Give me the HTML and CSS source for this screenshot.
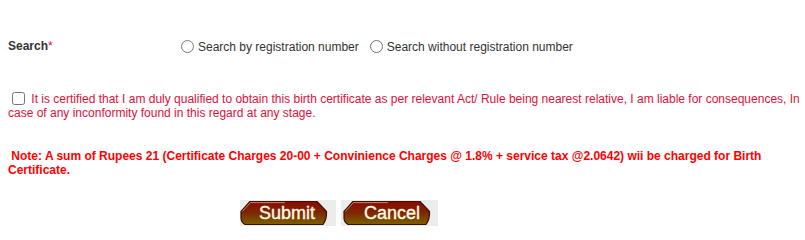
FILE: index.html
```html
<!DOCTYPE html>
<html>
<head>
<meta charset="utf-8">
<link rel="stylesheet" href="styles.css">
</head>
<body>
<div class="page">
  <div class="search-row">
    <div class="label">Search<span class="req">*</span></div>
    <div class="options">
      <label class="opt"><input type="radio" name="s" class="radio">Search by registration number</label>
      <label class="opt"><input type="radio" name="s" class="radio">Search without registration number</label>
    </div>
  </div>
  <div class="cert">
    <input type="checkbox" class="check"> It is certified that I am duly qualified to obtain this birth certificate as per relevant Act/ Rule being nearest relative, I am liable for consequences, In case of any inconformity found in this regard at any stage.
  </div>
  <div class="note">&nbsp;Note: A sum of Rupees 21 (Certificate Charges 20-00 + Convinience Charges @ 1.8% + service tax @2.0642) wii be charged for Birth Certificate.</div>
  <div class="buttons">
    <button class="btn btn-submit">
      <svg class="shape" viewBox="0 0 88 26" preserveAspectRatio="none">
        <defs>
          <linearGradient id="g1" x1="0" y1="0" x2="0" y2="1">
            <stop offset="0" stop-color="#8c0c04"/>
            <stop offset="0.45" stop-color="#7d2402"/>
            <stop offset="1" stop-color="#7b6000"/>
          </linearGradient>
        </defs>
        <path d="M10,1.5 L77,1.5 L86.5,11.5 Q87,19 83,24.5 L5,24.5 Q1,22 1,18 L1,11.5 Z" fill="url(#g1)" stroke="#3a1006" stroke-width="1.2" stroke-linejoin="round"/>
        <polyline points="2.2,11.5 10.4,2.6 45,2.6" fill="none" stroke="#d4a08a" stroke-width="0.8"/>
      </svg>
      <span class="txt">Submit</span>
    </button>
    <button class="btn btn-cancel">
      <svg class="shape" viewBox="0 0 88 26" preserveAspectRatio="none">
        <defs>
          <linearGradient id="g2" x1="0" y1="0" x2="0" y2="1">
            <stop offset="0" stop-color="#8c0c04"/>
            <stop offset="0.45" stop-color="#7d2402"/>
            <stop offset="1" stop-color="#7b6000"/>
          </linearGradient>
        </defs>
        <path d="M10,1.5 L77,1.5 L86.5,11.5 Q87,19 83,24.5 L5,24.5 Q1,22 1,18 L1,11.5 Z" fill="url(#g2)" stroke="#3a1006" stroke-width="1.2" stroke-linejoin="round"/>
        <polyline points="2.2,11.5 10.4,2.6 45,2.6" fill="none" stroke="#d4a08a" stroke-width="0.8"/>
      </svg>
      <span class="txt">Cancel</span>
    </button>
  </div>
</div>
</body>
</html>
```
FILE: styles.css
```css
html, body { margin: 0; padding: 0; background: #fff; }
body { font-family: "Liberation Sans", Arial, sans-serif; font-size: 12px; }
.page { padding: 0 0 0 8px; width: 795px; }
.search-row { display: flex; align-items: center; padding-top: 37px; height: 18px; }
.label { width: 173px; font-weight: bold; color: #333; }
.req { color: #e0103a; font-weight: normal; }
.options { display: flex; align-items: center; color: #333; padding-top: 1px; }
.opt { display: flex; align-items: center; margin-right: 11px; }
.radio { margin: 0 4px 0 0; width: 13px; height: 13px; }
.cert { margin-top: 37px; color: #e0103a; line-height: 14px; width: 795px; }
.check { margin: 0 3px 0 4px; width: 13px; height: 13px; vertical-align: -2px; }
.note { margin-top: 29px; color: #ff0000; font-weight: bold; line-height: 14px; width: 790px; }
.buttons { display: flex; gap: 5px; margin-top: 23px; padding-left: 232px; }
.btn {
  font-family: "Liberation Sans", Arial, sans-serif;
  font-size: 18px; color: #fffbe4; border: 0;
  height: 26px; background: #ececec; position: relative; cursor: pointer;
  display: flex; align-items: center; justify-content: flex-start;
}
.btn-submit { width: 96px; padding: 0 0 0 19px; }
.btn-cancel { width: 97px; padding: 0 0 0 23px; }
.shape { position: absolute; top: 0; width: 88px; height: 26px; }
.btn-submit .shape { left: 0; }
.btn-cancel .shape { left: 2px; }
.txt { position: relative; line-height: 26px; -webkit-text-stroke: 0.35px #fffbe4; }
```
